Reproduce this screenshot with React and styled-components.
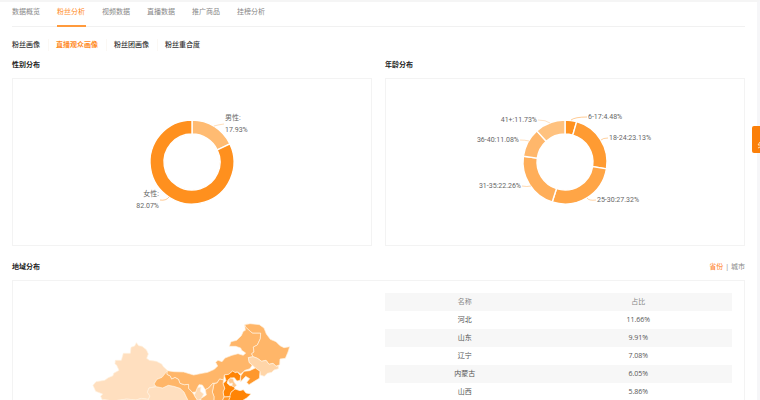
import React from "react";
import styled, { createGlobalStyle } from "styled-components";

const GlobalStyle = createGlobalStyle`
  * { box-sizing: border-box; }
  body {
    margin: 0;
    background: #fff;
    color: #333;
    font: 7px/12px "Open Sans", "Noto Sans CJK SC", sans-serif;
  }
  button {
    padding: 0;
    border: 0;
    background: none;
    color: inherit;
    font: inherit;
    cursor: pointer;
  }
`;

const Page = styled.main`
  height: 100vh;
  overflow: hidden;
  padding: 0 12px;
  border-top: 2px solid #f5f5f5;
  border-right: 3px solid #f6f6f8;
`;

const Tabs = styled.nav`
  display: flex;
  gap: 16px;
  height: 25px;
  border-bottom: 1px solid #f1f1f1;
`;

const Tab = styled.button`
  min-width: 29px;
  height: 25px;
  padding-bottom: 3px;
  border-bottom: 2px solid ${(p) => (p.$active ? "#ff9a3c" : "transparent")};
  color: ${(p) => (p.$active ? "#ff8a24" : "#888")};
  text-align: left;
`;

const SubTabs = styled.nav`
  display: flex;
  gap: 8px;
  margin-top: 12px;
`;

const SubTab = styled.button`
  color: ${(p) => (p.$active ? "#ff8a24" : "#333")};
  font-weight: ${(p) => (p.$active ? 700 : 500)};

  & + & {
    padding-left: 7px;
    border-left: 1px solid #fbf8f4;
  }
`;

const Columns = styled.div`
  display: grid;
  grid-template-columns: 1fr 1fr;
  gap: 13px;
`;

const SectionHead = styled.header`
  display: flex;
  align-items: center;
  justify-content: space-between;
  height: 12px;
  margin: ${(p) => (p.$spaced ? "15px" : "8px")} 0 7px;
`;

const Title = styled.h2`
  margin: 0;
  color: #222;
  font-size: 7px;
  font-weight: 700;
`;

const Panel = styled.section`
  border: 1px solid #f3f3f3;
`;

const ChartPanel = styled(Panel)`
  display: flex;
  justify-content: center;
  height: 168px;
`;

const RegionPanel = styled(Panel)`
  display: grid;
  grid-template-columns: 1fr 1fr;
  gap: 13px;
  padding: 12px 0;
`;

const MapArea = styled.div`
  display: flex;
  justify-content: center;
  padding: 17px 5px 0 0;
`;

const TableArea = styled.div`
  padding-right: 12px;
`;

const ChartText = styled.text`
  fill: #666;
  font: 7px Roboto, "Noto Sans CJK SC", sans-serif;
`;

const Switcher = styled.div`
  display: flex;
  gap: 2px;
  color: #888;
`;

const SwitchButton = styled.button`
  color: ${(p) => (p.$active ? "#ff7a1a" : "#888")};
`;

const Table = styled.table`
  width: 100%;
  border-collapse: collapse;
  table-layout: fixed;
  text-align: center;
`;

const Row = styled.tr`
  height: 18px;
  background: ${(p) => (p.$shaded ? "#f7f7f7" : "#fff")};
`;

const HeadCell = styled.th`
  width: ${(p) => p.$width};
  padding: 0;
  color: #888;
  font-weight: 400;
`;

const Cell = styled.td`
  padding: 0;
  color: #555;
`;

const SideButton = styled.button`
  position: fixed;
  top: 126px;
  right: 0;
  width: 8px;
  height: 27px;
  border-radius: 2px 0 0 2px;
  background: #fb7f08;

  svg { display: block; }
`;

const CX = 120;
const CY = 83;

function point(angle, radius) {
  return `${CX + radius * Math.sin(angle)} ${CY - radius * Math.cos(angle)}`;
}

function slicePath(from, to) {
  const a = from * Math.PI * 2;
  const b = to * Math.PI * 2;
  const large = to - from > 0.5 ? 1 : 0;
  return `M${point(a, 42)}A42 42 0 ${large} 1 ${point(b, 42)}L${point(b, 28)}A28 28 0 ${large} 0 ${point(a, 28)}Z`;
}

function Donut({ label, slices }) {
  let start = 0;
  const drawn = slices.map((s) => {
    const from = start;
    start += s.value / 100;
    return { ...s, path: slicePath(from, Math.min(start, 1)) };
  });
  return (
    <svg width="240" height="166" viewBox="0 0 240 166" role="img" aria-label={label}>
      {drawn.map((s) => (
        <g key={s.color}>
          <path d={s.path} fill={s.color} stroke="#fff" strokeWidth="1.4" />
          <path d={s.line} fill="none" stroke={s.color} strokeWidth="0.6" opacity="0.8" />
          {s.text.map((t, i) => (
            <ChartText key={t} x={s.x} y={s.y + i * 12} textAnchor={s.anchor}>{t}</ChartText>
          ))}
        </g>
      ))}
    </svg>
  );
}

const gender = [
  { value: 17.93, color: "#ffbb72", line: "M142 47Q145 46 152 45", text: ["男性:", "17.93%"], x: 153, y: 41, anchor: "start" },
  { value: 82.07, color: "#ff901e", line: "M97 118Q94 122 88 121", text: ["女性:", "82.07%"], x: 87, y: 117, anchor: "end" },
];

const ages = [
  { value: 4.48, color: "#ff9220", line: "M126 41Q130 38 142 38", text: ["6-17:4.48%"], x: 143, y: 40, anchor: "start" },
  { value: 23.13, color: "#ff9b32", line: "M156 61Q158 59 163 59", text: ["18-24:23.13%"], x: 164, y: 61, anchor: "start" },
  { value: 27.32, color: "#ffa546", line: "M142 119Q144 122 151 121", text: ["25-30:27.32%"], x: 152, y: 123, anchor: "start" },
  { value: 22.26, color: "#ffae59", line: "M86 107Q82 108 77 107", text: ["31-35:22.26%"], x: 76, y: 109, anchor: "end" },
  { value: 11.08, color: "#ffb76b", line: "M84 62Q80 61 75 61", text: ["36-40:11.08%"], x: 74, y: 63, anchor: "end" },
  { value: 11.73, color: "#ffc27f", line: "M105 44Q101 41 93 41", text: ["41+:11.73%"], x: 92, y: 43, anchor: "end" },
];

const provinces = [
  { name: "新疆", color: "#ffdfbf", d: "M39 226L48 215 74 211 85 203 99 197 101 190 117 181 110 166 105 161 106 151 124 151 130 130 151 130 153 112 164 108 169 98 176 107 186 109 199 119 205 132 200 145 208 151 229 154 245 162 250 170 262 181 260 195 246 202 231 208 222 222 229 230 207 234 202 247 210 258 205 268 184 265 168 270 140 267 100 273 66 268 62 259 68 252 47 244Z" },
  { name: "西藏", color: "#ffe3c8", d: "M66 268L100 273 140 267 168 270 184 265 205 268 220 290 250 330 100 330 72 290Z" },
  { name: "青海", color: "#ffdfbf", d: "M207 234L229 230 248 234 265 226 281 229 300 235 312 246 318 259 324 271 315 300 250 330 220 290 205 268 210 258 202 247Z" },
  { name: "甘肃", color: "#ffb669", d: "M262 182L261 193 271 198 275 207 285 202 296 208 300 220 313 224 326 223 326 235 337 247 342 254 351 269 365 276 350 305 330 288 324 271 318 259 312 246 300 235 281 229 265 226 248 234 229 230 222 222 231 208 246 202Z" },
  { name: "宁夏", color: "#ffdab3", d: "M347 246L352 233 363 231 361 244 371 252 363 268 353 271 343 256Z" },
  { name: "内蒙古", color: "#ffb669", d: "M262 182L282 185 311 186 341 195 366 190 383 187 403 178 413 168 407 157 414 151 426 155 435 144 456 136 474 131 490 136 497 129 485 121 482 114 467 109 448 109 453 95 470 91 484 77 490 64 496 61 494 44 503 42 497 51 512 65 518 69 542 69 541 86 532 105 520 111 522 126 515 131 519 140 505 143 508 158 517 165 510 176 495 181 482 192 472 186 462 188 458 183 446 193 433 195 431 210 419 207 411 219 398 220 386 234 376 239 367 225 357 224 352 233 347 246 337 247 326 235 326 223 313 224 300 220 296 208 285 202 275 207 271 198 261 193Z" },
  { name: "黑龙江", color: "#ffb669", d: "M495 44L510 41 538 44 552 54 559 72 571 88 588 95 600 107 612 113 629 110 624 126 616 145 600 147 599 164 588 169 579 160 567 163 558 151 545 154 532 145 519 140 515 131 522 126 520 111 532 105 541 86 542 69 518 69 512 65 497 51Z" },
  { name: "吉林", color: "#ffd5a8", d: "M505 143L519 140 532 145 545 154 558 151 567 163 579 160 588 169 595 168 595 176 582 180 575 187 562 190 553 199 541 195 540 184 526 174 517 165 508 158Z" },
  { name: "辽宁", color: "#ff982c", d: "M482 198L492 184 509 182 526 174 540 184 538 205 523 214 507 224 500 217 509 206 497 199 482 215Z" },
  { name: "河北", color: "#ff8405", d: "M433 195L446 193 458 183 466 188 472 186 482 197 480 211 471 213 463 203 452 204 444 211 441 219 450 227 462 228 465 237 453 247 451 260 432 261 429 246 434 235 429 221 438 212Z" },
  { name: "北京", color: "#ffc88e", d: "M444 211L452 204 460 207 462 216 470 226 464 232 456 228 457 219 449 221Z" },
  { name: "山西", color: "#ffad58", d: "M402 221L411 219 419 207 431 210 429 221 434 235 429 246 432 261 424 280 401 287 402 260 397 246Z" },
  { name: "陕西", color: "#ffbc76", d: "M376 239L386 234 398 220 402 221 397 246 402 260 401 287 395 311 365 305 350 305 365 276 362 266 379 255Z" },
  { name: "山东", color: "#ff8405", d: "M453 247L465 237 480 242 490 239 498 249 513 252 500 264 482 275 462 281 445 273Z" },
  { name: "河南", color: "#ff982c", d: "M424 280L432 261 451 260 445 273 462 281 465 315 420 315 401 287Z" },
];

const rows = [
  ["河北", "11.66%"],
  ["山东", "9.91%"],
  ["辽宁", "7.08%"],
  ["内蒙古", "6.05%"],
  ["山西", "5.86%"],
];

const tabs = ["数据概览", "粉丝分析", "视频数据", "直播数据", "推广商品", "挂榜分析"];
const subTabs = ["粉丝画像", "直播观众画像", "粉丝团画像", "粉丝重合度"];

export default function App() {
  return (
    <>
      <GlobalStyle />
      <Page>
        <Tabs>
          {tabs.map((t, i) => <Tab key={t} $active={i === 1}>{t}</Tab>)}
        </Tabs>
        <SubTabs>
          {subTabs.map((t, i) => <SubTab key={t} $active={i === 1}>{t}</SubTab>)}
        </SubTabs>
        <Columns>
          <div>
            <SectionHead><Title>性别分布</Title></SectionHead>
            <ChartPanel><Donut label="性别分布" slices={gender} /></ChartPanel>
          </div>
          <div>
            <SectionHead><Title>年龄分布</Title></SectionHead>
            <ChartPanel><Donut label="年龄分布" slices={ages} /></ChartPanel>
          </div>
        </Columns>
        <SectionHead $spaced>
          <Title>地域分布</Title>
          <Switcher>
            <SwitchButton $active>省份</SwitchButton>
            <span>|</span>
            <SwitchButton>城市</SwitchButton>
          </Switcher>
        </SectionHead>
        <RegionPanel>
          <MapArea>
            <svg width="220" height="110" viewBox="0 0 660 330" role="img" aria-label="地域分布">
              {provinces.map((p) => (
                <path key={p.name} d={p.d} fill={p.color} stroke="#fff1e0" strokeWidth="2" strokeLinejoin="round" />
              ))}
            </svg>
          </MapArea>
          <TableArea>
            <Table>
              <thead>
                <Row $shaded>
                  <HeadCell $width="46%">名称</HeadCell>
                  <HeadCell $width="54%">占比</HeadCell>
                </Row>
              </thead>
              <tbody>
                {rows.map(([name, share], i) => (
                  <Row key={name} $shaded={i % 2 === 1}>
                    <Cell>{name}</Cell>
                    <Cell>{share}</Cell>
                  </Row>
                ))}
              </tbody>
            </Table>
          </TableArea>
        </RegionPanel>
      </Page>
      <SideButton aria-label="展开">
        <svg width="8" height="27" viewBox="0 0 8 27">
          <path d="M8 16L6 19H8M6 22L8 21" fill="none" stroke="#ffe0b8" strokeWidth="1" />
        </svg>
      </SideButton>
    </>
  );
}
